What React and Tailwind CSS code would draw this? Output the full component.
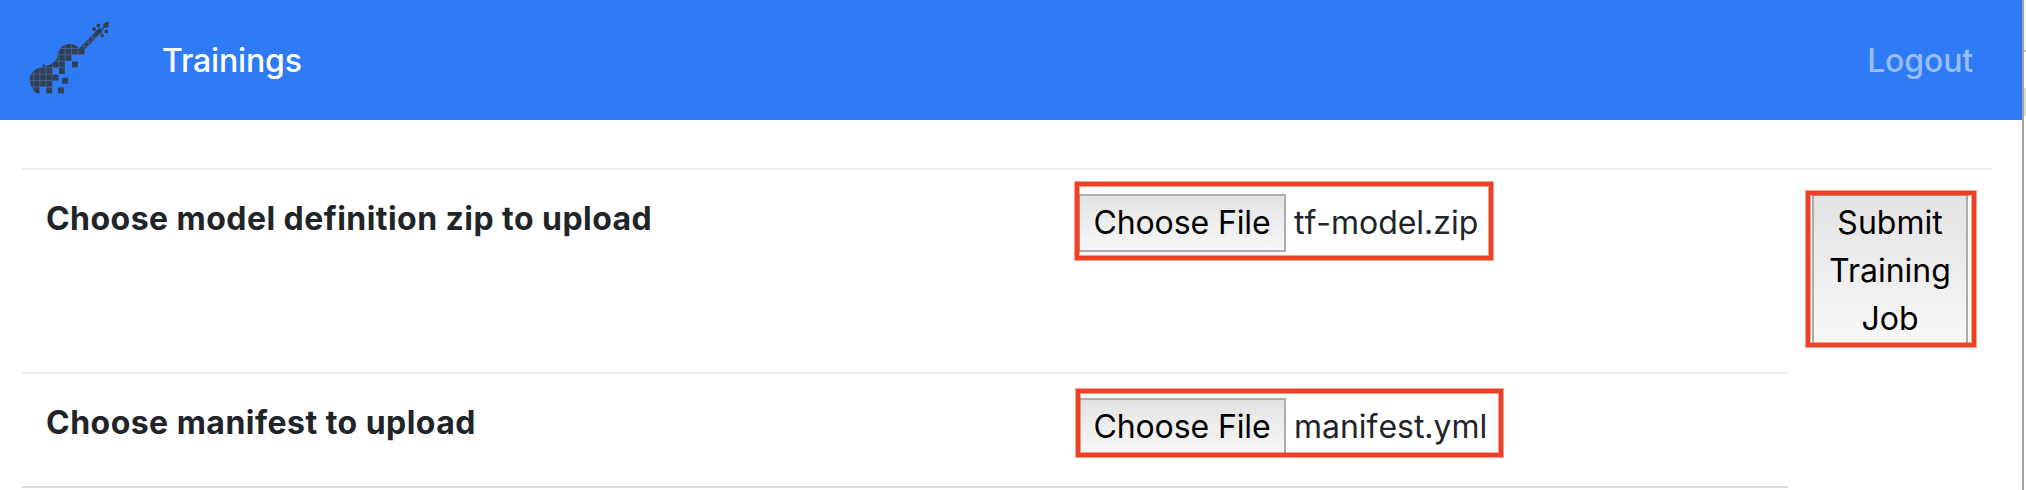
const LOOSE_PIXELS = [
  [72, 61.5],
  [59, 68],
  [52.6, 74.6],
  [62.2, 77.8],
  [46.3, 87.5],
  [58, 87.5],
];

function Logo() {
  return (
    <svg className="-mt-1 h-[76px] w-[84px] shrink-0" viewBox="28 20 84 76" aria-hidden="true">
      <defs>
        <clipPath id="violin">
          <path d="M42.5 67 L43.2 63.8 L45.5 66 Q54 64.500 57 58 Q59 44 69.500 44 Q76 44 80 48.700 L84.500 49 L84.500 54.600 L71.500 54.600 L71.500 61 L65 61 L65 67.500 L52.300 67.500 L52.300 86.800 L39.500 86.800 L39.500 93.300 L36 93.300 Q29.500 87 29.800 78.500 Q30.500 69 42.500 67Z" />
        </clipPath>
        <clipPath id="neck">
          <path d="M79 48.600 L97.500 29.800 L100.500 33 L83 51.500Z" />
        </clipPath>
      </defs>
      <g clipPath="url(#violin)">
        <path fill="#2f4055" d="M28 40h60v56h-60z" />
        <path
          stroke="#45679c"
          strokeWidth="0.8"
          fill="none"
          d="M33.700 40v56M39.900 40v56M46 40v56M52.400 40v56M58.800 40v56M65.100 40v56M71.600 40v56M78 40v56M28 48.500h60M28 54.800h60M28 61.200h60M28 67.600h30M28 74.100h60M28 80.500h60M28 86.900h60"
        />
      </g>
      <g clipPath="url(#neck)">
        <path fill="#2f4055" d="M76 26h30v30h-30z" />
        <path stroke="#45679c" strokeWidth="0.7" fill="none" d="M84.300 26v30M88.500 26v30M92.700 26v30M76 46.500h30M76 42h30M76 37.500h30" />
      </g>
      <g fill="#2f4055">
        {LOOSE_PIXELS.map(([x, y]) => (
          <rect key={`${x}-${y}`} x={x} y={y} width="5.900" height="5.900" />
        ))}
        <path d="M95.500 31 L99.500 28.500 L101.500 29.500 L103.500 26 L102.500 25 L105.500 22.500 L108.800 21.500 L108.500 26.500 L106 28 L104.300 27.500 L102 31 L102.500 32.500 L99 34.500Z" />
        <circle cx="94" cy="29" r="1.900" />
        <circle cx="98.400" cy="25.400" r="1.900" />
        <circle cx="106.300" cy="31.400" r="1.900" />
        <circle cx="102.300" cy="35.800" r="1.700" />
        <path stroke="#2f4055" strokeWidth="1" d="M94 29l4 3M98.400 25.400l2.500 5M102.300 35.800l-2 -4" />
      </g>
    </svg>
  );
}

function FileInput({ name }) {
  return (
    <div className="flex items-center">
      <button className="h-[58px] w-[208px] shrink-0 border-2 border-[#adadad] bg-linear-to-b from-[#e3e3e3] to-[#f8f8f8] tracking-[-0.1px] text-black">
        Choose File
      </button>
      <span className="ml-2 tracking-[-0.02px] whitespace-nowrap [font-kerning:none]">{name}</span>
    </div>
  );
}

function Highlight({ className }) {
  return (
    <div
      className={`absolute border-4 border-[#ed4025] shadow-[0_0_0_1px_#ed402580,inset_0_0_0_1px_#ed402580] ${className}`}
    />
  );
}

export default function App() {
  return (
    <div className="flex h-[490px] w-[2026px] overflow-hidden bg-white font-['Inter',sans-serif] text-[32px] leading-[48px] text-[#212529]">
      <div className="w-[2022px] shrink-0">
        <nav className="flex h-[120px] items-center bg-[#2f7bf6] pl-7">
          <Logo />
          <a className="mt-0.5 ml-[50px] font-[450] tracking-[-0.15px] text-white">Trainings</a>
          <a className="mt-0.5 mr-[49px] ml-auto font-[450] tracking-[-0.15px] text-[#97bdfb]">Logout</a>
        </nav>

        <main className="mt-12 ml-[22px] flex w-[1970px]">
          <div className="w-[1766px]">
            <div className="flex h-[204px] border-t-2 border-[#ebebf0]">
              <div className="w-[1032px] pt-[25px] pl-6 font-bold tracking-[0.45px]">Choose model definition zip to upload</div>
              <div className="relative pt-6 pl-6">
                <FileInput name="tf-model.zip" />
                <Highlight className="top-[12px] left-[21px] h-[78px] w-[418px]" />
              </div>
            </div>
            <div className="flex h-[116px] border-y-2 border-t-[#ebebf0] border-b-[#dcdcdc]">
              <div className="w-[1032px] pt-[25px] pl-6 font-bold tracking-[0.47px]">Choose manifest to upload</div>
              <div className="relative pt-6 pl-6">
                <FileInput name="manifest.yml" />
                <Highlight className="top-[15px] left-[22px] h-[68px] w-[427px]" />
              </div>
            </div>
          </div>
          <div className="relative h-[204px] w-[204px] border-t-2 border-[#ebebf0] pt-6 pl-6">
            <button className="h-[153px] w-[156px] border-2 border-[#adadad] bg-linear-to-b from-[#e3e3e3] to-[#f8f8f8] px-3 text-black">
              Submit Training Job
            </button>
            <Highlight className="top-[21px] left-[18px] h-[156px] w-[170px]" />
          </div>
        </main>
      </div>

      <div className="w-0.5 shrink-0 bg-[#a3a3a3]" />
      <div className="w-0.5 shrink-0">
        <div className="h-[50px] bg-[#f2f2f2]" />
        <div className="h-0.5 bg-[#c4c4c4]" />
        <div className="h-9" />
        <div className="h-7 bg-[#d9d9d9]" />
      </div>
    </div>
  );
}
